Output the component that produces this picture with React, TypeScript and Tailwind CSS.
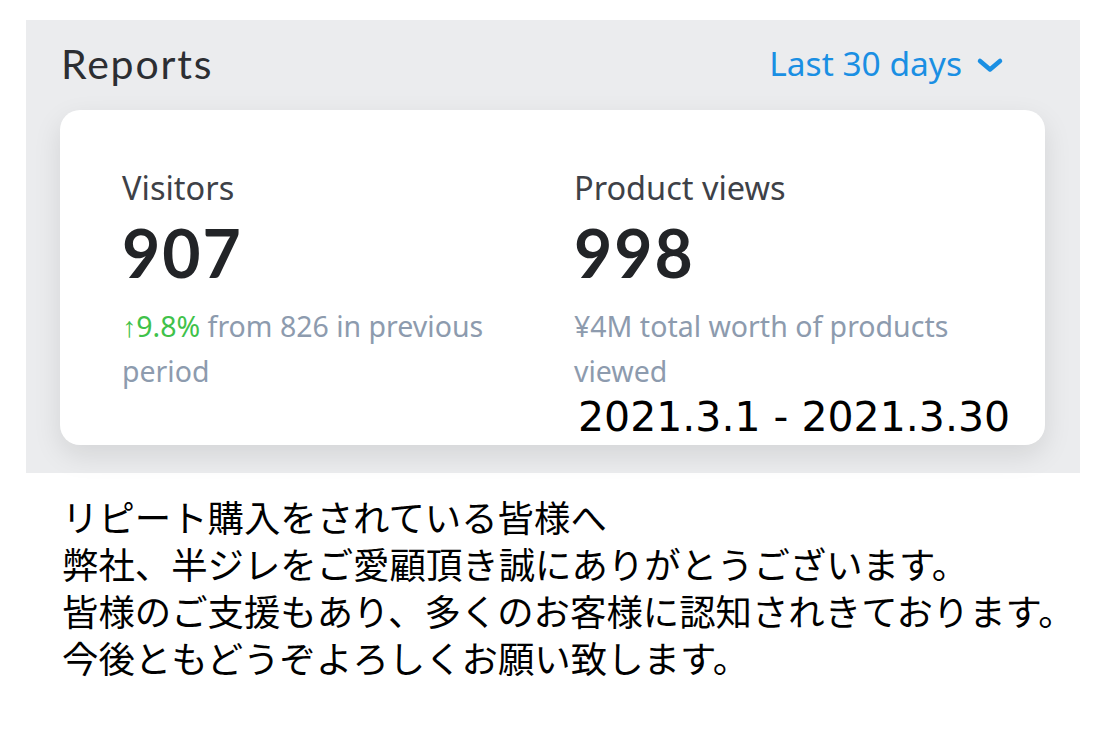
import React from "react";

export default function App() {
  return (
    <div className="w-[1100px] h-[739px] bg-white overflow-hidden">
      <div className="pt-[20px] pl-[26px]">
        <div className="w-[1054px] h-[453px] bg-[#ebecee] pl-[34px] pr-[35px]">
          <div className="flex items-center justify-between h-[90px] pl-[1px]">
            <div className="text-[41px] text-[#2c2e32] font-['Lato',sans-serif] tracking-[1.8px] leading-none -mt-[4px]">Reports</div>
            <div className="flex items-center gap-[14px] pr-[41px] -mt-[2px]">
              <span className="text-[33.5px] text-[#1a8fe3] font-['Noto_Sans',sans-serif] leading-none">Last 30 days</span>
              <svg width="28" height="16" viewBox="0 0 28 16" className="mt-[2px]">
                <path d="M4 4 L14 12.5 L24 4" fill="none" stroke="#1a8fe3" strokeWidth="4.5" strokeLinecap="round" strokeLinejoin="round" />
              </svg>
            </div>
          </div>
          <div className="h-[335px] bg-white rounded-[20px] shadow-[0_10px_28px_rgba(0,0,0,0.10)] pl-[62px] pt-[55px] relative">
            <div className="flex">
              <div className="w-[452px]">
                <div className="text-[32.5px] text-[#3e4147] font-['Noto_Sans',sans-serif] leading-[45px]">Visitors</div>
                <div className="text-[66px] font-bold text-[#222427] font-['Lato',sans-serif] leading-[82px] tracking-[2px] mt-[2px]">907</div>
                <div className="text-[28.5px] text-[#8d9bae] font-['Noto_Sans',sans-serif] leading-[45px] w-[400px] mt-[10px]">
                  <span className="text-[#3fc24a]">↑9.8%</span> from 826 in previous period
                </div>
              </div>
              <div className="w-[420px]">
                <div className="text-[32.5px] text-[#3e4147] font-['Noto_Sans',sans-serif] leading-[45px]">Product views</div>
                <div className="text-[66px] font-bold text-[#222427] font-['Lato',sans-serif] leading-[82px] tracking-[2px] mt-[2px]">998</div>
                <div className="text-[28.5px] text-[#8d9bae] font-['Noto_Sans',sans-serif] leading-[45px] w-[400px] mt-[10px]">
                  ¥4M total worth of products viewed
                </div>
              </div>
            </div>
            <div className="absolute left-[518px] top-[287px] text-[41px] text-black font-['DejaVu_Sans',sans-serif] leading-none">
              2021.3.1 - 2021.3.30
            </div>
          </div>
        </div>
      </div>
      <div className="pl-[62px] pt-[20px] text-[36.4px] leading-[47px] text-black font-['Noto_Sans_CJK_JP',sans-serif]">
        <div>リピート購入をされている皆様へ</div>
        <div>弊社、半ジレをご愛顧頂き誠にありがとうございます。</div>
        <div>皆様のご支援もあり、多くのお客様に認知されきております。</div>
        <div>今後ともどうぞよろしくお願い致します。</div>
      </div>
    </div>
  );
}
